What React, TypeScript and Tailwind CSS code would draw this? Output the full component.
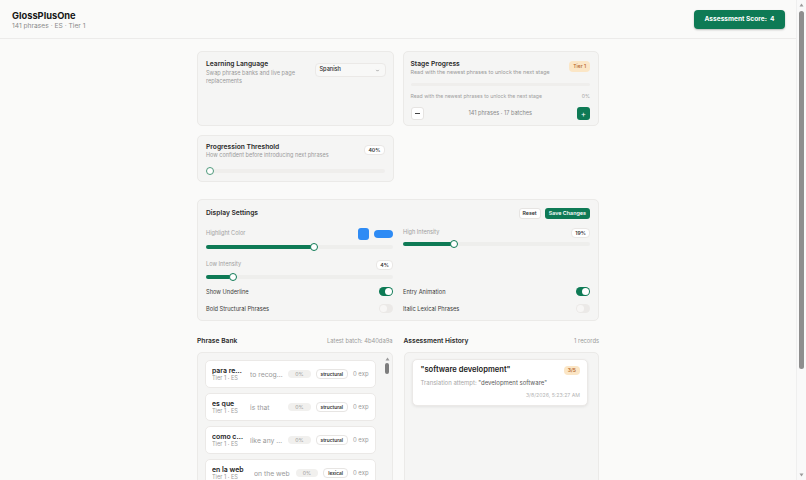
import React from "react";

const phrases = [
  { phrase: "para reconocer", tr: "to recognize", tag: "structural" },
  { phrase: "es que", tr: "is that", tag: "structural" },
  { phrase: "como cualquier", tr: "like any other", tag: "structural" },
  { phrase: "en la web", tr: "on the web", tag: "lexical" },
  { phrase: "sin embargo", tr: "however", tag: "structural" },
  { phrase: "por lo tanto", tr: "therefore", tag: "structural" },
  { phrase: "la página", tr: "the page", tag: "lexical" },
];

function Slider({ pct }: { pct: number }) {
  return (
    <div className="relative h-[8px] w-full">
      <div className="absolute left-0 right-0 top-[2px] h-[4px] rounded-full bg-[#eeeeec]">
        <div className="h-full rounded-full bg-[#0e7a55]" style={{ width: `calc(4px + ${pct} * (100% - 8px) / 100)` }} />
      </div>
      <div
        className="absolute top-0 h-[8px] w-[8px] rounded-full border border-[#0e7a55] bg-white"
        style={{ left: `calc(${pct} * (100% - 8px) / 100)` }}
      />
    </div>
  );
}

function Toggle({ on }: { on?: boolean }) {
  return (
    <div className={`flex h-[9px] w-[14px] items-center rounded-full px-[1px] ${on ? "justify-end bg-[#0e7a55]" : "justify-start bg-[#ebe9e7]"}`}>
      <div className={`h-[7px] w-[7px] rounded-full ${on ? "bg-white" : "bg-[#f7f6f5]"}`} />
    </div>
  );
}

function Badge({ children }: { children: React.ReactNode }) {
  return (
    <span className="block whitespace-nowrap rounded-[4px] border border-[#e9e7e5] bg-white px-[3px] text-[5.2px] font-semibold leading-[8px] text-[#333]">
      {children}
    </span>
  );
}

export default function App() {
  return (
    <div className="flex h-screen bg-[#fafaf9] font-['Inter',sans-serif] leading-none text-[#1c1c1c]">
      <div className="h-screen min-w-0 flex-1 overflow-y-scroll [scrollbar-width:none]">
        <header className="flex h-[39px] items-center justify-between border-b border-[#ecebea] pl-[12px] pr-[11px]">
          <div className="pt-[1px]">
            <div className="text-[9.3px] font-bold leading-[11px] text-[#161616]">GlossPlusOne</div>
            <div className="mt-[1px] text-[6.7px] leading-[8px] text-[#8b8b8b]">141 phrases · ES · Tier 1</div>
          </div>
          <button className="h-[19px] w-[91px] rounded-[4px] bg-[#0e7a55] text-[6.6px] font-bold text-white shadow-[0_1px_2px_rgba(0,0,0,0.25)]">
            Assessment Score:&nbsp; 4
          </button>
        </header>

        <main className="mx-auto w-[402px] pb-[24px] pt-[12px]">
          <div className="grid grid-cols-2 gap-[9px]">
            <section className="h-[75px] rounded-[5px] border border-[#ebeae8] bg-[#f5f5f4] pl-[8px] pr-[7px] pt-[8px]">
              <div className="flex items-start justify-between gap-[6px]">
                <div>
                  <div className="text-[6.7px] font-semibold leading-[9px] text-[#2a2a2a]">Learning Language</div>
                  <div className="mt-[1px] w-[100px] text-[5.6px] leading-[7.5px] text-[#9a9a9a]">Swap phrase banks and live page replacements</div>
                </div>
                <div className="mt-[3px] flex h-[14px] w-[71px] shrink-0 items-center justify-between rounded-[4px] border border-[#ebe9e7] bg-[#f8f8f7] pl-[4px] pr-[5px] text-[5.6px] font-medium text-[#2c2c2c]">
                  Spanish
                  <svg width="5" height="5" viewBox="0 0 24 24" fill="none" stroke="#777" strokeWidth="3"><path d="m6 9 6 6 6-6" /></svg>
                </div>
              </div>
            </section>

            <section className="h-[75px] rounded-[5px] border border-[#ebeae8] bg-[#f5f5f4] pl-[7px] pr-[8px] pt-[8px]">
              <div className="flex items-start justify-between">
                <div>
                  <div className="text-[6.7px] font-semibold leading-[9px] text-[#2a2a2a]">Stage Progress</div>
                  <div className="text-[5.4px] leading-[7px] text-[#9a9a9a]">Read with the newest phrases to unlock the next stage</div>
                </div>
                <span className="mt-[1px] block whitespace-nowrap rounded-[4px] bg-[#fbe6c6] px-[4px] text-[5px] font-medium leading-[11px] text-[#b4652a]">Tier 1</span>
              </div>
              <div className="mt-[7px] h-[3px] rounded-full bg-[#efeeec]" />
              <div className="mt-[7px] flex justify-between text-[5.1px] leading-[7px] text-[#9e9e9e]">
                <span>Read with the newest phrases to unlock the next stage</span>
                <span>0%</span>
              </div>
              <div className="mt-[7px] flex items-center justify-between">
                <button className="flex h-[13px] w-[13px] items-center justify-center rounded-[3px] border border-[#e6e4e2] bg-white">
                  <span className="h-[1px] w-[5px] bg-[#444]" />
                </button>
                <span className="text-[5.6px] text-[#8a8a8a]">141 phrases · 17 batches</span>
                <button className="flex h-[13px] w-[13px] items-center justify-center rounded-[3px] bg-[#0e7a55] text-[8px] leading-none text-white">
                  +
                </button>
              </div>
            </section>

            <section className="h-[47px] rounded-[5px] border border-[#ebeae8] bg-[#f5f5f4] px-[8px] pt-[7px]">
              <div className="flex items-start justify-between">
                <div>
                  <div className="text-[6.7px] font-semibold leading-[9px] text-[#2a2a2a]">Progression Threshold</div>
                  <div className="text-[5.5px] leading-[7px] text-[#9a9a9a]">How confident before introducing next phrases</div>
                </div>
                <div className="mt-[2px]"><Badge>40%</Badge></div>
              </div>
              <div className="relative mt-[8px] h-[8px]">
                <div className="absolute left-[4px] right-0 top-[2px] h-[4px] rounded-full bg-[#efeeec]" />
                <div className="absolute left-0 top-0 h-[8px] w-[8px] rounded-full border border-[#4f9a7c] bg-white" />
              </div>
            </section>
          </div>

          <section className="mt-[17px] rounded-[5px] border border-[#ebeae8] bg-[#f5f5f4] px-[8px] pb-[7px] pt-[8px]">
            <div className="flex h-[11px] items-center justify-between">
              <div className="text-[6.7px] font-semibold text-[#2a2a2a]">Display Settings</div>
              <div className="flex gap-[4px]">
                <button className="h-[11px] rounded-[3px] border border-[#e6e4e2] bg-white px-[3px] text-[5.2px] font-semibold text-[#333]">Reset</button>
                <button className="h-[11px] rounded-[3px] bg-[#0e7a55] px-[4px] text-[5.4px] font-semibold text-white">Save Changes</button>
              </div>
            </div>

            <div className="mt-[9px] grid grid-cols-2 items-start gap-x-[10px]">
              <div>
                <div className="flex items-center justify-between">
                  <span className="text-[5.6px] text-[#a0a0a0]">Highlight Color</span>
                  <div className="flex items-center gap-[5px]">
                    <span className="h-[12px] w-[11px] rounded-[3px] bg-[#2e8bf4]" />
                    <span className="h-[8px] w-[19px] rounded-[4px] bg-[#2e8bf4]" />
                  </div>
                </div>
                <div className="mt-[3px]">
                  <Slider pct={58} />
                </div>
                <div className="mt-[9px] flex items-center justify-between">
                  <span className="text-[5.6px] text-[#a0a0a0]">Low Intensity</span>
                  <Badge>4%</Badge>
                </div>
                <div className="mt-[3px]">
                  <Slider pct={13} />
                </div>
              </div>
              <div>
                <div className="flex items-center justify-between">
                  <span className="text-[5.6px] text-[#a0a0a0]">High Intensity</span>
                  <Badge>19%</Badge>
                </div>
                <div className="mt-[2px]">
                  <Slider pct={26} />
                </div>
              </div>
            </div>

            <div className="mt-[6px] grid grid-cols-2 gap-x-[10px] gap-y-[8px] text-[5.7px] leading-[9px] text-[#3a3a3a]">
              <div className="flex items-center justify-between"><span>Show Underline</span><Toggle on /></div>
              <div className="flex items-center justify-between"><span>Entry Animation</span><Toggle on /></div>
              <div className="flex items-center justify-between"><span>Bold Structural Phrases</span><Toggle /></div>
              <div className="flex items-center justify-between"><span>Italic Lexical Phrases</span><Toggle /></div>
            </div>
          </section>

          <div className="mt-[15px] grid grid-cols-2 gap-[11px]">
            <div>
              <div className="flex h-[10px] items-center justify-between">
                <span className="text-[6.7px] font-semibold text-[#2a2a2a]">Phrase Bank</span>
                <span className="text-[5.8px] text-[#9a9a9a]">Latest batch: 4b40da9a</span>
              </div>
              <div className="mt-[6px] flex h-[238px] rounded-[5px] border border-[#ebeae8] bg-[#f5f5f4] pl-[7px] pr-[1px] pt-[1px]">
                <div className="flex min-w-0 flex-1 flex-col gap-[5px] overflow-y-scroll pt-[6px] [scrollbar-width:none]">
                  {phrases.map((p) => (
                    <div key={p.phrase} className="flex h-[28px] shrink-0 items-center gap-[5px] rounded-[5px] border border-[#ebe9e7] bg-white px-[6px]">
                      <div className="flex min-w-0 flex-1 items-center gap-[5px]">
                        <div className="min-w-0 flex-1">
                          <div className="truncate text-[6.9px] font-semibold leading-[9px] text-[#222]">{p.phrase}</div>
                          <div className="truncate text-[5.6px] leading-[7px] text-[#9a9a9a]">Tier 1 · ES</div>
                        </div>
                        <div className="min-w-0 flex-1 truncate text-[6.8px] leading-[9px] text-[#9a9a9a]">{p.tr}</div>
                      </div>
                      <span className="rounded-full bg-[#f1f0ee] px-[7px] text-[5.2px] leading-[8px] text-[#9a9a9a]">0%</span>
                      <span className="rounded-[4px] border border-[#e7e5e3] bg-white px-[4px] text-[4.8px] font-semibold leading-[8px] text-[#333]">{p.tag}</span>
                      <span className="text-[5.9px] text-[#9a9a9a]">0 exp</span>
                    </div>
                  ))}
                </div>
                <div className="ml-[8px] flex w-[7px] flex-col items-center pt-[3px]">
                  <svg width="5" height="4" viewBox="0 0 10 8"><path d="M5 1 9 7H1z" fill="#9a9a9a" /></svg>
                  <div className="mt-[2px] h-[11px] w-[4px] rounded-full bg-[#7d7d7d]" />
                </div>
              </div>
            </div>

            <div>
              <div className="flex h-[10px] items-center justify-between">
                <span className="text-[6.7px] font-semibold text-[#2a2a2a]">Assessment History</span>
                <span className="text-[5.8px] text-[#9a9a9a]">1 records</span>
              </div>
              <div className="mt-[6px] h-[238px] rounded-[5px] border border-[#ebeae8] bg-[#f5f5f4] pl-[7px] pr-[10px] pt-[6px]">
                <div className="rounded-[5px] border border-[#ebe9e7] bg-white pb-[6px] pl-[8px] pr-[7px] pt-[5px] shadow-[0_1px_3px_rgba(0,0,0,0.08)]">
                  <div className="flex h-[10px] items-center justify-between">
                    <span className="text-[7.6px] font-semibold text-[#222]">"software development"</span>
                    <span className="rounded-[4px] bg-[#fbe6c6] px-[4px] text-[5px] font-semibold leading-[9px] text-[#b4652a]">3/5</span>
                  </div>
                  <div className="mt-[4px] text-[6px] leading-[8px] text-[#a8a8a8]">
                    Translation attempt: <span className="text-[#5a5a5a]">"development software"</span>
                  </div>
                  <div className="mt-[5px] text-right text-[5.2px] leading-[7px] text-[#b5b5b5]">3/8/2026, 5:23:27 AM</div>
                </div>
              </div>
            </div>
          </div>
        </main>
      </div>

      <div className="flex h-screen w-[10px] shrink-0 flex-col items-center border-l border-[#efefef] bg-[#f9f9f9] py-[3px]">
        <svg width="5" height="4" viewBox="0 0 10 8"><path d="M5 1 9 7H1z" fill="#9a9a9a" /></svg>
        <div className="mt-[4px] h-[358px] w-[5px] rounded-full bg-[#8e8e8e]" />
        <div className="flex-1" />
        <svg width="5" height="4" viewBox="0 0 10 8"><path d="M1 1h8L5 7z" fill="#9a9a9a" /></svg>
      </div>
    </div>
  );
}
